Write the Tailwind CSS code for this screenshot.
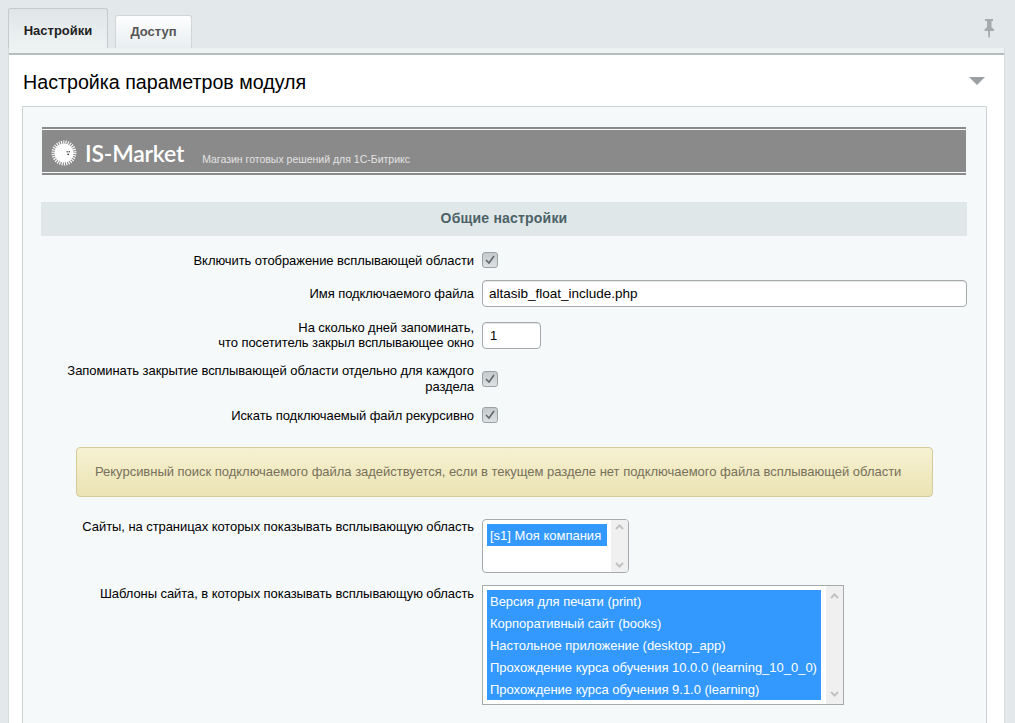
<!DOCTYPE html>
<html lang="ru">
<head>
<meta charset="utf-8">
<title>Настройка параметров модуля</title>
<script src="https://cdn.jsdelivr.net/npm/@tailwindcss/browser@4"></script>
</head>
<body class="h-[723px] overflow-hidden bg-[#e3e9eb] font-['Liberation_Sans',Arial,sans-serif] text-[13px] text-black">
<div class="flex h-[48px] items-end justify-between pl-[8px] pr-[10px]">
  <div class="flex items-end gap-[7px]">
    <div class="flex h-[40px] w-[100px] items-start justify-center rounded-t-[3px] border border-b-0 border-[#c3cbcd] bg-gradient-to-b from-[#dfe6e8] to-[#eef2f3] pt-[14px] text-[13px] leading-[15px] font-bold text-[#222]">Настройки</div>
    <div class="flex h-[33px] w-[77px] items-start justify-center rounded-t-[3px] border border-b-0 border-[#d0d6d8] bg-gradient-to-b from-[#fdfefe] to-[#e9eef0] pt-[8px] text-[13px] leading-[15px] font-bold text-[#555]">Доступ</div>
  </div>
  <svg class="mb-[10px] mr-[9px]" width="14" height="20" viewBox="0 0 14 20"><path d="M3 1h8v2H9.500v6l2.500 2.500V13H8v6.500H6.500L6 13H2.500v-1.500L5 9V3H3z" fill="#a4abad"/></svg>
</div>
<div class="ml-[8px] mr-[10px] h-[700px] border-r border-l border-[#d5dcde] bg-white">
  <div class="h-[7px] border-b-2 border-[#b5bdbf] bg-[#eef2f3]"></div>
  <div class="flex h-[51px] items-center justify-between pr-[19px] pl-[14px]">
    <h1 class="pt-[2px] text-[19.660px] leading-[24px] font-normal text-black">Настройка параметров модуля</h1>
    <svg width="16" height="8" viewBox="0 0 16 8"><path d="M0 0h16l-8 8z" fill="#9a9fa1"/></svg>
  </div>
  <div class="mr-[17px] ml-[13px] h-[640px] border-t border-r border-l border-[#cdd4d6] bg-[#f5f9fa] px-[18px] pt-[20px]">
    <div class="mx-[1px] flex h-[48px] w-[924px] items-center border-y-2 border-y-[#8a8a8a] bg-[#8a8a8a] pl-[9px] shadow-[inset_0_1px_0_#f5f9fa,inset_0_-1px_0_#f5f9fa]">
      <svg width="26" height="30" viewBox="0 0 26 30" class="mr-[8px] mt-[4px]">
        <circle cx="13" cy="15" r="9.500" fill="#fff"/>
        <circle cx="13" cy="15" r="10.500" fill="none" stroke="#fff" stroke-width="4" stroke-dasharray="1.100 1.100"/>
        <circle cx="16.200" cy="13.800" r="0.700" fill="#333"/><circle cx="18.200" cy="13.800" r="0.700" fill="#333"/><circle cx="17.200" cy="16.300" r="0.900" fill="#444"/>
      </svg>
      <span class="mt-[3px] font-['Lato',sans-serif] text-[23px] leading-[28px] font-semibold tracking-[-0.2px] text-white">IS-Market</span>
      <span class="mt-[15px] ml-[18px] text-[10.500px] leading-[12px] text-[#e2e2e2]">Магазин готовых решений для 1С-Битрикс</span>
    </div>
    <div class="mt-[27px] flex h-[34px] w-[926px] items-center justify-center bg-[#e0e7e9] pb-[2px] text-[14px] font-bold tracking-[0.2px] text-[#4b6267]">Общие настройки</div>
    <div class="grid w-[926px] grid-cols-[433px_1fr] items-center gap-x-[8px] pt-[14px] leading-[15px] tracking-[-0.07px]">
      <div class="text-right">Включить отображение всплывающей области</div>
      <div class="flex h-[20px] items-center"><span class="flex h-[16px] w-[16px] items-center justify-center rounded-[3px] border border-[#9da3a5] bg-gradient-to-b from-[#c4c9cb] to-[#dde1e3]"><svg width="12" height="10" viewBox="0 0 12 10"><path d="M2 5l3 3 5-7" fill="none" stroke="#5d6669" stroke-width="1.500"/></svg></span></div>

      <div class="mt-[10px] text-right">Имя подключаемого файла</div>
      <div class="mt-[10px] flex h-[27px] w-[485px] items-center rounded-[4px] border border-[#a5abad] bg-white pl-[6px] text-[13.500px] tracking-normal shadow-[inset_0_1px_1px_#e5e5e5]">altasib_float_include.php</div>

      <div class="mt-[13px] text-right">На сколько дней запоминать,<br>что посетитель закрыл всплывающее окно</div>
      <div class="mt-[13px] flex h-[27px] w-[59px] items-center rounded-[4px] border border-[#a5abad] bg-white pl-[7px] shadow-[inset_0_1px_1px_#e5e5e5]">1</div>

      <div class="mt-[13px] text-right leading-[16px]">Запоминать закрытие всплывающей области отдельно для каждого раздела</div>
      <div class="mt-[13px] flex h-[20px] items-center"><span class="flex h-[16px] w-[16px] items-center justify-center rounded-[3px] border border-[#9da3a5] bg-gradient-to-b from-[#c4c9cb] to-[#dde1e3]"><svg width="12" height="10" viewBox="0 0 12 10"><path d="M2 5l3 3 5-7" fill="none" stroke="#5d6669" stroke-width="1.500"/></svg></span></div>

      <div class="mt-[10px] text-right">Искать подключаемый файл рекурсивно</div>
      <div class="mt-[10px] flex h-[20px] items-center"><span class="flex h-[16px] w-[16px] items-center justify-center rounded-[3px] border border-[#9da3a5] bg-gradient-to-b from-[#c4c9cb] to-[#dde1e3]"><svg width="12" height="10" viewBox="0 0 12 10"><path d="M2 5l3 3 5-7" fill="none" stroke="#5d6669" stroke-width="1.500"/></svg></span></div>
    </div>
    <div class="mt-[22px] ml-[35px] flex h-[50px] w-[857px] items-center rounded-[4px] border border-[#d3cb9c] bg-gradient-to-b from-[#f6f1d2] to-[#ebe3b3] pl-[18px] tracking-[-0.02px] text-[#77705a]">Рекурсивный поиск подключаемого файла задействуется, если в текущем разделе нет подключаемого файла всплывающей области</div>
    <div class="grid w-[926px] grid-cols-[433px_1fr] items-start gap-x-[8px] pt-[22px] leading-[15px]">
      <div class="text-right tracking-[-0.07px]">Сайты, на страницах которых показывать всплывающую область</div>
      <div class="flex h-[54px] w-[147px] rounded-[4px] border border-[#a5abad] bg-white py-[4px] pl-[4px]">
        <div class="flex-1"><div class="h-[22px] w-[120px] bg-[#3399ff] pt-[1px] pl-[3px] leading-[22px] text-white">[s1] Моя компания</div></div>
        <div class="mt-[-4px] mb-[-4px] flex w-[17px] flex-col items-center justify-between rounded-r-[3px] bg-[#f0f0f0] py-[4px]">
          <svg width="9" height="6" viewBox="0 0 9 6"><path d="M1 5l3.500-3.500L8 5" fill="none" stroke="#c2c2c2" stroke-width="2"/></svg>
          <svg width="9" height="6" viewBox="0 0 9 6"><path d="M1 1l3.500 3.500L8 1" fill="none" stroke="#c2c2c2" stroke-width="2"/></svg>
        </div>
      </div>
      <div class="mt-[12px] pt-[1px] text-right tracking-[-0.07px]">Шаблоны сайта, в которых показывать всплывающую область</div>
      <div class="mt-[12px] flex h-[120px] w-[362px] border border-[#a5abad] bg-white py-[4px] pl-[4px]">
        <div class="flex-1">
          <div class="h-[110px] w-[334px] bg-[#3399ff] pt-[1px] pl-[3px] leading-[22px] tracking-[-0.02px] text-white">
            <div>Версия для печати (print)</div>
            <div>Корпоративный сайт (books)</div>
            <div>Настольное приложение (desktop_app)</div>
            <div>Прохождение курса обучения 10.0.0 (learning_10_0_0)</div>
            <div>Прохождение курса обучения 9.1.0 (learning)</div>
          </div>
        </div>
        <div class="mt-[-4px] mb-[-4px] flex w-[17px] flex-col items-center justify-between bg-[#f0f0f0] py-[7px]">
          <svg width="9" height="6" viewBox="0 0 9 6"><path d="M1 5l3.500-3.500L8 5" fill="none" stroke="#c2c2c2" stroke-width="2"/></svg>
          <svg width="9" height="6" viewBox="0 0 9 6"><path d="M1 1l3.500 3.500L8 1" fill="none" stroke="#c2c2c2" stroke-width="2"/></svg>
        </div>
      </div>
    </div>
  </div>
</div>
</body>
</html>
